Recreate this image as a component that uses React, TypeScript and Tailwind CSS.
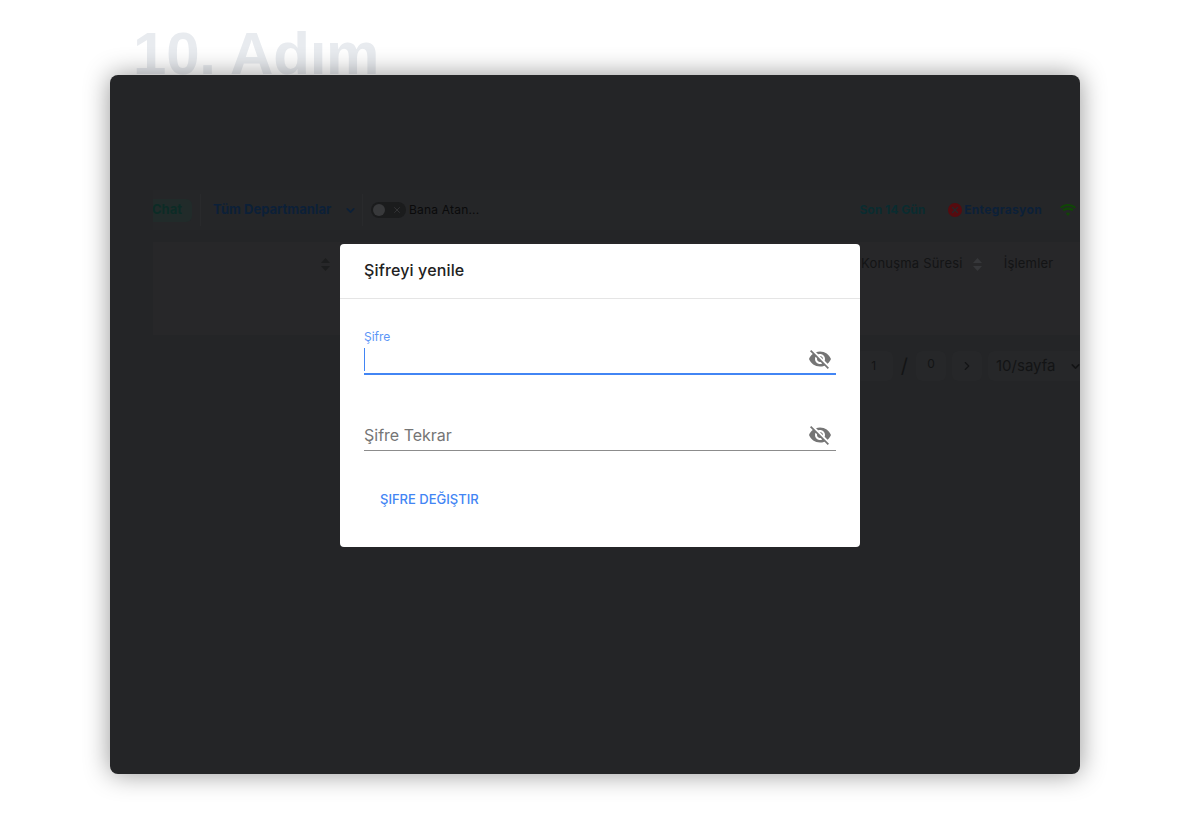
import { ChevronDown, ChevronRight, X } from 'lucide-react';

function SortIcon({ color }: { color: string }) {
  return (
    <svg width="9" height="13" viewBox="0 0 9 13" fill={color}>
      <path d="M4.5 0 9 5H0z" />
      <path d="M4.5 13 0 8h9z" />
    </svg>
  );
}

function EyeOffIcon({ className }: { className: string }) {
  return (
    <svg width="24" height="24" viewBox="0 0 24 24" fill="#757575" className={`mr-1 shrink-0 ${className}`}>
      <path d="M12 7c2.76 0 5 2.24 5 5 0 .65-.13 1.26-.36 1.83l2.92 2.92c1.51-1.26 2.7-2.89 3.43-4.75-1.73-4.39-6-7.5-11-7.5-1.4 0-2.74.25-3.98.7l2.16 2.16C10.74 7.13 11.35 7 12 7zM2 4.27l2.28 2.28.46.46C3.08 8.3 1.78 10.02 1 12c1.73 4.39 6 7.5 11 7.5 1.55 0 3.03-.3 4.38-.84l.42.42L19.73 22 21 20.73 3.27 3 2 4.27zM7.53 9.8l1.55 1.55c-.05.21-.08.43-.08.65 0 1.66 1.34 3 3 3 .22 0 .44-.03.65-.08l1.55 1.55c-.67.33-1.41.53-2.2.53-2.76 0-5-2.24-5-5 0-.79.2-1.53.53-2.2zm4.31-.78 3.15 3.15.02-.16c0-1.66-1.34-3-3-3l-.17.01z" />
    </svg>
  );
}

function Backdrop() {
  return (
    <div className="h-full overflow-hidden rounded-lg pt-[115px] pl-[43px]">
      {/* toolbar */}
      <div className="flex h-10 items-center whitespace-nowrap bg-[#252628]">
        <span className="flex h-[23px] w-[39px] items-center justify-end overflow-hidden rounded-r-md bg-[#212b2a] pr-2.5 text-[13px] font-bold text-[#0c2b26]">
          Chat
        </span>
        <div className="ml-2 flex h-8 w-[163px] items-center justify-between border-x border-[#292a2c] pr-[5px] pl-[12px]">
          <span className="text-[13px] font-bold text-[#0c2038]">Tüm Departmanlar</span>
          <ChevronDown size={13} strokeWidth={3} className="text-[#0c2038]" />
        </div>
        <div className="ml-2 flex h-4 w-[35px] items-center justify-between rounded-full bg-[#1b1c1d] px-0.5">
          <span className="size-3 rounded-full bg-[#38393b]" />
          <X size={10} className="mr-0.5 text-[#38393b]" />
        </div>
        <span className="ml-[3px] text-xs tracking-[0.2px] text-[#0a0a0b]">Bana Atan...</span>
        <div className="flex-1" />
        <span className="text-xs font-bold text-[#0a2c30]">Son 14 Gün</span>
        <span className="ml-[23px] flex size-3.5 items-center justify-center rounded-full bg-[#560b0f]">
          <X size={10} strokeWidth={3} className="text-[#26272a]" />
        </span>
        <span className="ml-0.5 text-xs font-bold tracking-[0.35px] text-[#0c2038]">Entegrasyon</span>
        <svg width="16" height="12" viewBox="0 0 16 12" fill="#114507" className="mr-1 ml-[18px]">
          <path d="M8 12 5.8 9.4a3.4 3.4 0 0 1 4.4 0zM3.8 7.2a6.4 6.4 0 0 1 8.4 0l1.6-1.9a9 9 0 0 0-11.6 0zM0 3a12 12 0 0 1 16 0l-1.3 1.6a10 10 0 0 0-13.4 0z" />
        </svg>
      </div>

      {/* table head */}
      <div className="mt-3 flex h-[93px] bg-[#272729] pl-2 text-[13px] tracking-[0.2px] text-[#131415]">
        <div className="flex h-11 w-[169px] items-center justify-end">
          <SortIcon color="#1c1d1e" />
        </div>
        <div className="ml-[531px] flex h-11 items-center whitespace-nowrap">
          <span>Konuşma Süresi</span>
          <span className="ml-2.5">
            <SortIcon color="#36373a" />
          </span>
          <span className="ml-[22px]">İşlemler</span>
        </div>
      </div>

      {/* pagination */}
      <div className="mt-4 mr-[-8px] flex items-center justify-end text-[15px] text-[#131415]">
        <span className="flex h-[30px] w-[38px] items-center justify-center rounded-md bg-[#262729] text-xs">1</span>
        <span className="mx-2 text-xl">/</span>
        <span className="flex size-[30px] items-center justify-center rounded-md bg-[#262729] pb-1 text-xs">0</span>
        <span className="ml-1.5 flex size-[30px] items-center justify-center rounded-md bg-[#262729]">
          <ChevronRight size={14} />
        </span>
        <span className="ml-1.5 flex h-[30px] w-[100px] shrink-0 items-center justify-between rounded-md bg-[#262729] pr-1.5 pl-2">
          10/sayfa
          <ChevronDown size={13} strokeWidth={3} />
        </span>
      </div>
    </div>
  );
}

export default function App() {
  return (
    <div className="relative min-h-screen overflow-hidden bg-white px-[110px] pt-[75px] font-['Inter',sans-serif]">
      <h1 className="absolute left-[133px] top-[19px] font-['Liberation_Sans',sans-serif] text-[60px] leading-[70px] font-bold tracking-[-0.2px] text-[#e8ebef]">
        10. Adım
      </h1>

      <div className="relative h-[699px] w-[970px] rounded-lg bg-[#242527] shadow-[0_0_26px_rgba(0,0,0,0.42)]">
        <Backdrop />
      </div>

      {/* dialog */}
      <div className="absolute left-[340px] top-[244px] h-[303px] w-[520px] rounded bg-white">
        <div className="flex h-[55px] items-center border-b border-[#e5e5e5] px-6 pb-0.5 text-base font-medium tracking-[0.15px] text-[#212121]">
          Şifreyi yenile
        </div>
        <div className="px-6 pt-6">
          <div className="flex h-[52px] items-end justify-between border-b-2 border-[#4285f4]">
            <div className="flex h-full flex-col pt-[7px]">
              <span className="text-xs leading-[14px] text-[#5b96f7]">Şifre</span>
              <span className="mt-1 h-[23px] w-px bg-[#4285f4]" />
            </div>
            <EyeOffIcon className="mb-0.5" />
          </div>
          <div className="mt-[25px] flex h-[51px] items-end justify-between border-b border-[#8c8c8c]">
            <span className="pb-[3px] text-base leading-6 text-[#757575]">Şifre Tekrar</span>
            <EyeOffIcon className="mb-[3px]" />
          </div>
          <button className="mt-[31px] h-9 px-4 text-[13px] font-medium text-[#4285f4]">ŞIFRE DEĞIŞTIR</button>
        </div>
      </div>
    </div>
  );
}
